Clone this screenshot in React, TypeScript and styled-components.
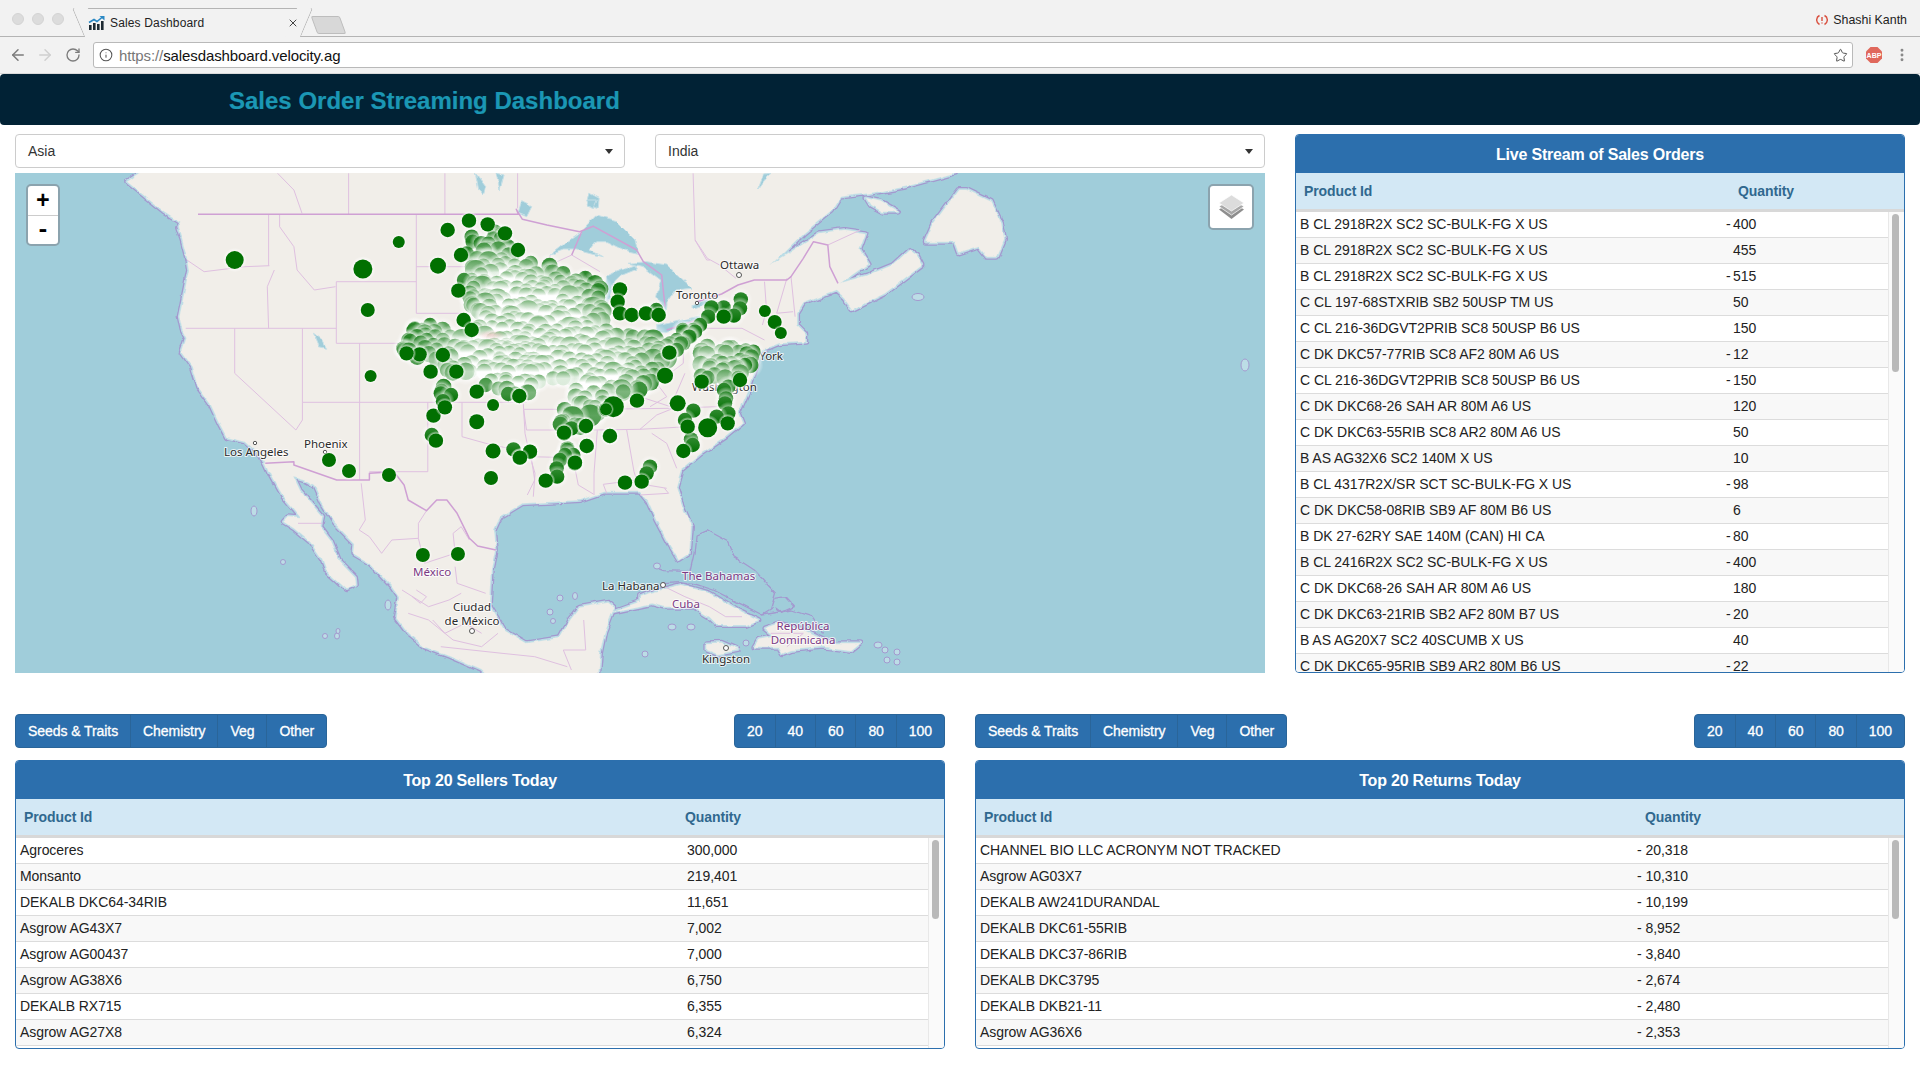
import React from "react";
import styled, { createGlobalStyle } from "styled-components";
import { ArrowLeft, ArrowRight, RotateCw, Info, Star, EllipsisVertical, X } from "lucide-react";

const GlobalStyle = createGlobalStyle`
  html, body { margin: 0; padding: 0; background: #fff; }
  body { font-family: "Liberation Sans", Arial, sans-serif; font-size: 14px; color: #222; overflow: hidden; }
`;

/* ---------- browser chrome ---------- */
const Page = styled.div`width: 1920px; height: 1080px; overflow: hidden; background: #fff;`;
const TabStrip = styled.div`
  height: 37px; box-sizing: border-box; background: #f2f2f2; border-bottom: 1px solid #b4b4b4;
  display: flex; align-items: flex-start; padding-left: 12px;
`;
const Lights = styled.div`display: flex; gap: 8px; margin-top: 13px;`;
const Light = styled.span`width: 12px; height: 12px; border-radius: 50%; background: #dcdcdc; border: 1px solid #d4d4d4; box-sizing: border-box;`;
const Tab = styled.div`
  position: relative; margin: 8px 0 -1px 21px; width: 215px; height: 29px; box-sizing: border-box;
  background: #f2f2f2; border-top: 1px solid #b4b4b4; display: flex; align-items: center; gap: 5px;
  padding: 0 0 0 3px; font-size: 12px; color: #222;
  &::before, &::after {
    content: ""; position: absolute; top: -1px; width: 16px; height: 29px; background: #f2f2f2; box-sizing: border-box;
  }
  &::before { left: -7px; border-left: 1px solid #b4b4b4; transform: skewX(23deg); border-top-left-radius: 3px; }
  &::after { right: -7px; border-right: 1px solid #b4b4b4; transform: skewX(-23deg); border-top-right-radius: 3px; }
`;
const TabLabel = styled.span`position: relative; z-index: 1; letter-spacing: 0.15px;`;
const TabClose = styled.span`position: relative; z-index: 1; margin-left: auto; margin-right: 1px; display: flex; color: #444;`;
const NewTab = styled.div`
  width: 27px; height: 16px; margin: 16px 0 0 14px; background: #d8d8d8; border: 1px solid #bdbdbd;
  border-radius: 2px; transform: skewX(20deg);
`;
const UserBadge = styled.div`margin-left: auto; margin-top: 13px; padding-right: 13px; display: flex; align-items: center; gap: 5px; font-size: 12.4px; color: #222;`;
const Toolbar = styled.div`
  height: 37px; box-sizing: border-box; background: #f2f2f2; border-bottom: 1px solid #dadada; display: flex; align-items: center;
  padding: 0 10px 0 9px;
`;
const NavButton = styled.span<{ $dim?: boolean }>`
  width: 27.500px; display: flex; color: ${p => (p.$dim ? "#d0d0d0" : "#7c7c7c")};
  &:nth-child(3) { padding-left: 1px; width: 26.500px; }
`;
const Omnibox = styled.div`
  width: 1761px; margin-left: 1.500px; height: 26px; box-sizing: border-box; background: #fff; border: 1px solid #b9b9b9;
  border-radius: 3px; display: flex; align-items: center; padding: 0 4px 0 5px; gap: 6px; font-size: 15px; color: #111;
  letter-spacing: -0.1px;
`;
const UrlScheme = styled.span`color: #777;`;
const InfoIcon = styled.span`display: flex; color: #555;`;
const StarIcon = styled.span`margin-left: auto; display: flex; color: #555;`;
const Extensions = styled.div`display: flex; align-items: center; margin-left: 12px; gap: 11px; color: #888;`;

/* ---------- header ---------- */
const Banner = styled.header`
  height: 51px; box-sizing: border-box; padding: 2px 0 0 229px; background: #012235; border-radius: 4px; display: flex; align-items: center;
`;
const BannerTitle = styled.h1`margin: 0; font-size: 24px; font-weight: 700; color: #1b97b4; -webkit-text-stroke: 0.2px #1b97b4;`;

/* ---------- page layout ---------- */
const Content = styled.main`padding: 9px 15px 0;`;
const TopRow = styled.section`display: grid; grid-template-columns: 1250px 610px; gap: 30px;`;
const MapColumn = styled.div`display: flex; flex-direction: column; gap: 5px;`;
const SelectRow = styled.div`display: grid; grid-template-columns: 610px 610px; gap: 30px;`;
const FakeSelect = styled.div`
  height: 34px; box-sizing: border-box; border: 1px solid #ccc; border-radius: 4px; background: #fff;
  display: flex; align-items: center; justify-content: space-between; padding: 0 11px 0 12px; font-size: 14px; color: #333;
  &::after { content: ""; border: 4.5px solid transparent; border-top: 5px solid #333; border-bottom: 0; }
`;
const MapFrame = styled.div`position: relative; height: 500px; background: #a0cdda; overflow: hidden;`;
const MapSvg = styled.svg`display: block; width: 1250px; height: 500px;`;
const ZoomControl = styled.div`
  position: absolute; left: 11px; top: 11px; width: 30px; border: 2px solid #8ba3ae; border-radius: 5px; background: #fff;
  display: flex; flex-direction: column;
`;
const ZoomButton = styled.div`
  height: 29px; box-sizing: border-box; padding-top: 2px; display: flex; align-items: center; justify-content: center;
  font: 700 23px "Liberation Mono", monospace; color: #000;
  & + & { border-top: 1px solid #ccc; }
`;
const LayersControl = styled.div`
  position: absolute; right: 11px; top: 11px; width: 42px; height: 42px; border: 2px solid #8ba3ae; border-radius: 5px;
  background: #fff; display: flex; align-items: center; justify-content: center;
`;
const BottomRow = styled.section`margin-top: 41px; display: grid; grid-template-columns: 930px 930px; gap: 30px;`;
const Block = styled.div`display: flex; flex-direction: column; gap: 12px;`;
const ToolRow = styled.div`display: flex; justify-content: space-between;`;
const ButtonGroup = styled.div`display: flex; height: 34px; border-radius: 4px; overflow: hidden; border: 1px solid #2a6599; box-sizing: border-box; background: #2c6fad;`;
const GroupButton = styled.div`
  padding: 0 12px; display: flex; align-items: center; color: #fff; font-size: 14px; -webkit-text-stroke: 0.3px #fff; letter-spacing: -0.07px;
  & + & { border-left: 1px solid #2a6599; }
`;

/* ---------- tables ---------- */
const Panel = styled.div<{ $h: number }>`
  height: ${p => p.$h}px; box-sizing: border-box; border: 1px solid #2c6fad; border-radius: 4px; overflow: hidden;
  display: flex; flex-direction: column; background: #fff;
`;
const PanelTitle = styled.div`
  flex: none; height: 38px; box-sizing: border-box; padding-top: 2px; background: #2c6fad; color: #fff; font-size: 16px; font-weight: 700; display: flex;
  align-items: center; justify-content: center; letter-spacing: -0.2px;
`;
const TableHead = styled.div<{ $col: number }>`
  flex: none; height: 36px; box-sizing: content-box; background: #d3e8f5; border-bottom: 3px solid #d8d8d8; color: #30688f;
  font-size: 14px; font-weight: 700; display: grid; grid-template-columns: ${p => p.$col}px 1fr; align-items: center;
  padding-left: 8px; letter-spacing: -0.1px;
`;
const TableBody = styled.div`flex: 1; min-height: 0; display: flex; overflow: hidden;`;
const Rows = styled.div`flex: 1; min-width: 0;`;
const Row = styled.div<{ $col: number; $alt: boolean }>`
  height: 26px; box-sizing: border-box; padding: 0 0 2px 4px; border-bottom: 1px solid #dcdcdc; display: grid; grid-template-columns: ${p => p.$col}px 1fr; align-items: center;
  background: ${p => (p.$alt ? "#f8f8f8" : "#fff")}; font-size: 14px; color: #222; white-space: nowrap; letter-spacing: -0.05px;
`;
const Sign = styled.span`display: inline-block; width: 7px;`;
const ScrollTrack = styled.div`flex: none; width: 16px; box-sizing: border-box; background: #fafafa; border-left: 1px solid #e8e8e8; padding: 2px 0 0 3px;`;
const ScrollThumb = styled.div<{ $h: number }>`width: 7px; height: ${p => p.$h}px; background: #b9b9b9; border-radius: 4px;`;

/* ---------- map styles ---------- */
const Coast = styled.path`fill: none; stroke: #a399cf; stroke-width: 6; stroke-linejoin: round;`;
const CoastInner = styled.path`fill: none; stroke: #bcdde6; stroke-width: 3.400; stroke-linejoin: round;`;
const Land = styled.path`fill: #f1eee9; stroke: #f1eee9; stroke-width: 0.4; stroke-linejoin: round;`;
const Lake = styled.path`fill: #a0cdda; stroke: #c6e0e7; stroke-width: 1; stroke-linejoin: round;`;
const StateLine = styled.path`fill: none; stroke: #dfc0e0; stroke-width: 1; stroke-linejoin: round;`;
const NationLine = styled.path`fill: none; stroke: #cfa0d4; stroke-width: 1.5; stroke-linejoin: round;`;
const OutlineOnly = styled.path`fill: none; stroke: #a399cf; stroke-width: 1.3; stroke-linejoin: round;`;
const Islet = styled.ellipse`fill: #bcdde6; stroke: #a399cf; stroke-width: 1;`;
const CityMark = styled.circle`fill: #fff; stroke: #555; stroke-width: 1;`;
const Label = styled.text<{ $place?: boolean }>`
  font-family: "Noto Sans", sans-serif; font-size: 11.5px; fill: ${p => (p.$place ? "#7b3a84" : "#2b2b2b")};
  stroke: rgba(255,255,255,.75); stroke-width: 2px; paint-order: stroke; stroke-linejoin: round;
`;

/* ---------- map geometry, traced in the reference's pixel space ---------- */
type Fn = (x: number, y: number) => [number, number];
const Z5: Fn = (x, y) => [x / 2.45, 170 + y / 3];
const Z6: Fn = (x, y) => [640 + x / 2.45, 170 + y / 3];
const Z7: Fn = (x, y) => [x / 2.45, 420 + y / 3];
const Z8: Fn = (x, y) => [640 + x / 2.45, 420 + y / 3];
const Z10: Fn = (x, y) => [390 + x / 3, 200 + y / 3];
const Z11: Fn = (x, y) => [510 + x / 3, 340 + y / 3];

const pts = (fn: Fn, s: string): [number, number][] =>
  s.trim().split(/\s+/).map(p => { const [a, b] = p.split(",").map(Number); return fn(a, b); });
const d = (p: [number, number][], close = false) =>
  "M" + p.map(q => q[0].toFixed(1) + " " + q[1].toFixed(1)).join("L") + (close ? "Z" : "");
const line = (fn: Fn, s: string) => d(pts(fn, s));
const shape = (fn: Fn, s: string) => d(pts(fn, s), true);

const mainland = d([
  ...pts(Z5, "345,-20 345,8 312,35 345,68 400,122 442,155 436,170 447,210 458,262 463,300 455,350 440,440 447,480 457,505 445,548 470,590 485,650 515,700 540,765 556,802 600,815 640,860"),
  ...pts(Z7, "650,130 665,170 690,225 720,268 738,295 705,292 695,305 720,325 760,365 790,420 800,452 850,508 872,495 870,470 830,420 810,360 785,320 790,290 770,262 735,212 718,168 745,178 770,195 790,250 820,310 870,372 868,402 905,428 960,500 978,532 970,592 1000,640 1040,680 1100,708 1180,750 1200,775 1465,775 1470,700 1480,640 1505,560 1490,545 1420,560 1395,600 1370,655 1290,670 1235,630 1200,560 1205,450 1215,390 1210,330 1225,290 1280,250 1350,245 1420,240 1480,215 1568,215"),
  ...pts(Z8, "0,215 20,245 40,300 70,370 95,420 120,400 125,320 100,250 88,200 100,150 150,100 210,50 250,10"),
  ...pts(Z6, "250,760 240,730 265,660 285,590 290,545 340,520 405,515 405,490 385,465 385,430 400,400 480,362 500,385 520,418 600,370 692,285 680,258 660,240 620,285 560,315 490,340 560,280 540,240 555,190 500,180 440,190 320,285 400,190 470,120 490,80 560,70 650,50 760,12 770,8 790,-20"),
], true);
const newfoundland = shape(Z6, "700,215 720,160 780,60 800,60 860,95 885,160 892,210 875,260 850,260 830,230 780,250 770,215");
const anticosti = shape(Z6, "555,85 590,95 632,125 595,125 565,105");
const cuba = d([...pts(Z7, "1568,545 1500,575"), ...pts(Z8, "30,550 60,560 130,560 170,590 190,615 260,615 290,600 240,570 170,520 100,495 20,520 0,530")], true);
const hispaniola = shape(Z8, "305,625 340,610 400,630 470,670 540,670 520,690 450,680 370,690 350,700 340,680 280,680 290,660 330,650");
const jamaica = shape(Z8, "165,670 200,668 240,690 190,702 165,690");
const bahamas = line(Z8, "55,488 100,485 130,490 180,510 260,560 300,585 320,570 332,520 280,450 230,410 215,365 165,332 140,345 135,400 125,455 60,452 35,440");
const bahamasEast = line(Z8, "332,535 355,530 378,560 345,578 330,565");
const cubaOuter = line(Z8, "300,585 370,570 420,590 450,640");
const landforms = [mainland, newfoundland, anticosti, cuba, hispaniola, jamaica];

const lakes = [
  shape(Z10, "480,165 525,130 572,97 620,48 680,65 735,120 745,160 700,150 650,125 620,125 600,150 640,170 560,150 520,150"),
  shape(Z10, "650,228 660,222 735,195 742,207 690,228 672,245 655,300 645,360 640,395 633,400 635,330"),
  shape(Z10, "770,185 830,195 880,240 908,265 855,270 828,310 826,335 800,290 812,240 760,200 715,190"),
  shape(Z10, "800,375 930,345 925,362 830,398 800,398"),
  shape(Z10, "905,318 950,300 962,310 915,326"),
  shape(Z5, "1165,10 1190,50 1185,72 1172,55"),
  shape(Z5, "1215,10 1235,15 1225,60"),
  shape(Z5, "1445,70 1468,85 1465,115 1438,105"),
  shape(Z5, "768,490 790,510 800,535 782,530"),
  shape(Z10, "385,40 395,5 425,20 410,50"),
  shape(Z10, "590,0 622,0 612,22 596,16"),
  shape(Z6, "290,60 320,10 305,12"),
];

const stateLines = [
  line(Z5, "458,270 500,305 600,290 660,287"), line(Z5, "658,135 658,287"), line(Z5, "672,300 655,350 658,475"),
  line(Z5, "685,135 685,170 720,230 728,300 770,360 822,350"), line(Z5, "824,335 1020,335"), line(Z5, "824,335 824,520 1020,520"),
  line(Z5, "1020,135 1020,430 1135,430"), line(Z5, "1020,290 1150,290"), line(Z5, "455,475 824,475"),
  line(Z5, "575,475 575,610 725,780 741,750 741,697"), line(Z5, "741,475 741,697 1290,697"), line(Z5, "881,520 881,930"),
  line(Z5, "1048,697 1048,905 905,905"), line(Z5, "1132,697 1132,800 1190,820 1300,850 1310,930 1292,975"),
  line(Z5, "1283,720 1290,780 1450,780"), line(Z5, "854,10 854,133"), line(Z5, "1090,10 1090,133"),
  line(Z5, "680,10 720,60 740,130"), line(Z5, "1268,10 1268,115"),
  line(Z10, "480,165 480,195 545,165 630,215"), line(Z10, "915,120 950,180 960,180"),
  line(Z11, "40,190 45,280 60,350 75,400 70,470"), line(Z11, "42,208 250,208 480,205 620,200"),
  line(Z11, "60,350 140,352 190,360 205,435 250,462"), line(Z11, "250,270 390,268"), line(Z11, "262,270 252,400 252,465"),
  line(Z11, "350,270 372,395 380,420 280,433 290,460"), line(Z11, "390,268 440,225 490,205"), line(Z11, "425,280 470,310 500,385"),
  line(Z11, "470,445 380,430"), line(Z11, "390,268 500,262 560,260"), line(Z11, "440,130 470,170 420,200"),
  line(Z11, "450,70 440,130 520,70 520,0"),
  line(Z6, "130,10 135,210 165,265 195,285 235,325"), line(Z6, "305,335 310,420 300,465"), line(Z6, "360,325 335,430 375,425"),
  line(Z6, "370,320 380,440"), line(Z6, "160,475 250,475 305,510"), line(Z6, "0,680 75,710 110,610"), line(Z6, "460,225 540,180"),
  line(Z8, "60,205 70,220 0,225"),
  line(Z7, "885,190 895,300 880,330 905,350 935,400 960,360 1025,355 1025,310 1045,272"),
  line(Z7, "1025,355 1040,430 1115,400 1110,340 1130,320 1150,360"), line(Z7, "1115,440 1120,490 1190,520"),
  line(Z7, "985,510 1050,560 1100,540 1130,520"), line(Z7, "1000,580 1050,600 1110,660 1180,680 1220,640"),
  line(Z7, "1080,680 1230,700 1310,710 1390,740"), line(Z7, "1430,600 1435,690 1380,690 1400,750"),
  line(Z7, "1020,510 1045,530 1030,550 1010,530"), line(Z7, "1060,600 1090,640 1140,610 1180,640"),
  line(Z7, "730,310 790,310"), line(Z8, "60,500 110,530 170,560 210,590 250,590"), line(Z8, "320,640 400,640 360,680"),
];
const nationLines = [
  line(Z5, "485,133 1270,133 1265,118 1280,148 1340,165 1420,185 1455,168"),
  line(Z10, "612,80 740,150 760,185 815,225 825,320"), line(Z10, "830,390 950,350"),
  line(Z10, "575,95 545,165"),
  line(Z6, "140,395 200,372 240,345 280,330 360,330 370,320 400,265 425,215 460,225 465,290 485,340"),
  line(Z7, "650,130 720,125 720,135 825,180 905,180 905,160 965,155 990,195 1000,240 1045,272 1070,240 1095,240 1120,280 1150,355 1170,378 1215,390"),
];

/* ---------- dots ---------- */
type Dot = { x: number; y: number; r: number; boost?: number };
const inPoly = (x: number, y: number, poly: [number, number][]) => {
  let inside = false;
  for (let i = 0, j = poly.length - 1; i < poly.length; j = i++) {
    const [xi, yi] = poly[i]; const [xj, yj] = poly[j];
    if (yi > y !== yj > y && x < ((xj - xi) * (y - yi)) / (yj - yi) + xi) inside = !inside;
  }
  return inside;
};
let seed = 20170;
const rnd = () => { seed = (seed * 48271) % 2147483647; return seed / 2147483647; };
const scatter = (poly: [number, number][], step: number, boost = 0): Dot[] => {
  const xs = poly.map(p => p[0]); const ys = poly.map(p => p[1]);
  const out: Dot[] = [];
  for (let y = Math.min(...ys); y < Math.max(...ys); y += step) {
    for (let x = Math.min(...xs); x < Math.max(...xs); x += step) {
      const px = x + (rnd() - 0.5) * step * 0.9; const py = y + (rnd() - 0.5) * step * 0.9;
      if (inPoly(px, py, poly)) out.push({ x: px, y: py, r: rnd() > 0.92 ? 11 : 7 + rnd() * 1.8, boost });
    }
  }
  return out;
};
const midwest = [
  ...pts(Z10, "235,170 300,100 345,100 360,160 420,185 510,195 560,235 625,230 640,320 660,400 830,420 850,470 790,530"),
  ...pts(Z11, "420,110 430,150 380,150 340,170 270,170 230,130 140,110 60,100"),
  ...pts(Z10, "320,480 250,420 260,340 230,290 240,230"),
];
const kansas = pts(Z5, "1000,470 1060,450 1140,500 1300,530 1330,620 1300,680 1240,680 1190,640 1150,610 1120,610 1100,680 1085,720 1070,710 1085,650 1085,600 1040,565 985,570 980,530");
const arm = pts(Z11, "165,190 200,140 270,160 290,200 230,260 150,270 140,240");
const atlantic = pts(Z11, "550,40 600,15 740,30 720,80 700,130 640,130 570,110 540,80");

const explicit = (fn: Fn, s: string, r = 7.2): Dot[] =>
  s.trim().split(/\s+/).map(p => { const [a, b, c] = p.split(",").map(Number); const [x, y] = fn(a, b); return { x, y, r: c || r }; });

const field: Dot[] = [
  ...scatter(midwest, 8), ...scatter(kansas, 9, 0.22), ...scatter(arm, 9, 0.28), ...scatter(atlantic, 9, 0.35),
  ...explicit(Z10, "245,110 248,125 310,115 315,95 230,160 245,240 222,240 240,295 250,315 95,390 120,375 75,385 55,420 110,420 130,435 40,445 880,395 900,410 915,395 860,420 840,430 880,430"),
  ...explicit(Z11, "180,220 225,225 240,200 172,325 150,360 190,345 140,385 165,345 550,212 525,240 543,298 548,315 620,230 655,220 645,190 648,175 642,150 655,140 420,380 410,400 300,190 645,85 680,80 705,75 690,60 730,35 710,40 570,40"),
  ...explicit(Z6, "247,388 245,415 230,437 205,412 175,412 167,440 147,465 130,480 105,480 120,500 100,520 90,540 15,430 40,420"),
  ...explicit(Z5, "1105,675 1080,670 1190,645 1245,672 1290,665 1240,635 1300,635 1320,635 1355,625 1380,625 1058,795 1258,838 1298,846 1400,775 1375,755 1500,708 1390,840 1408,880 1365,920"),
].sort((a, b) => a.y - b.y);

const BUCKETS = 8;
const shade = (m: number) => {
  const t = Math.min(1, Math.max(0, m));
  const c = (v: number) => Math.round(v + (255 - v) * t);
  return `rgb(${c(1)},${c(112)},${c(1)})`;
};
const bucketOf = (a: Dot) => {
  let n = 0;
  for (const b of field) {
    const dx = b.x - a.x; const dy = b.y - a.y;
    if (dx * dx + dy * dy < 1600) n++;
  }
  const t = Math.min(1, Math.max(0, (n - 32) / 36 + (a.boost || 0)));
  return Math.round(t * (BUCKETS - 1));
};

const topDots: Dot[] = [
  ...explicit(Z5, "575,270,9 889,297,9.5 977,216,6 901,420,7 908,618,6 806,870,7 855,903,7 953,915,7 1203,924,7 1208,843,7.5 1168,755,7.5 1208,705,6 1028,553 996,550 1085,555 1055,605 1118,605 1168,665 1272,678 1062,737 1090,712 1068,812 1273,863 1382,790 1435,768 1438,828 1494,798 1485,718 1337,932"),
  ...explicit(Z7, "1036,405,7 1122,402,7"),
  ...explicit(Z10, "237,62 173,90,7.2 293,73 345,100 384,150 213,165 144,197,8 205,272 221,360 245,390 690,268 683,305 690,340 725,345 768,340 806,345 838,458"),
  ...explicit(Z11, "478,38 465,107,8 503,190,8 381,182 310,200,10.5 288,208,6 28,168 300,288 230,318 228,258 162,278 60,335 30,353 195,368 345,428 395,425 520,333 533,260 593,263,9.5 653,250 690,120 575,125"),
  ...explicit(Z6, "306,423,6 330,456,7 345,489,6 205,440"),
];

const Cluster = () => (
  <>
    {field.map((c, i) => (
      <g key={i}>
        <circle cx={c.x} cy={c.y} r={c.r * 1.6} fill="url(#dotGlow)" />
        <circle cx={c.x} cy={c.y} r={c.r} fill={`url(#dome${bucketOf(c)})`} />
      </g>
    ))}
    {topDots.map((c, i) => (
      <g key={i}>
        <circle cx={c.x} cy={c.y} r={c.r * 1.35} fill="url(#dotGlowSoft)" />
        <circle cx={c.x} cy={c.y} r={c.r} fill="#017001" />
      </g>
    ))}
    <ellipse cx={491} cy={335} rx={14} ry={5} fill="url(#pinkSpot)" />
  </>
);

const UsMap = () => (
  <MapSvg viewBox="15 173 1250 500">
    <defs>
      <radialGradient id="dotGlow">
        <stop offset="0.55" stopColor="#fff" stopOpacity="0.6" />
        <stop offset="1" stopColor="#fff" stopOpacity="0" />
      </radialGradient>
      <radialGradient id="dotGlowSoft">
        <stop offset="0.7" stopColor="#fff" stopOpacity="0.7" />
        <stop offset="1" stopColor="#fff" stopOpacity="0" />
      </radialGradient>
      <radialGradient id="pinkSpot">
        <stop offset="0" stopColor="#f3c4c4" stopOpacity="0.65" />
        <stop offset="1" stopColor="#f3c4c4" stopOpacity="0" />
      </radialGradient>
      {Array.from({ length: BUCKETS }, (_, k) => {
        const t = k / (BUCKETS - 1);
        return (
          <linearGradient key={k} id={`dome${k}`} x1="0" y1="0" x2="0" y2="1">
            <stop offset="0" stopColor={shade(0.18 + 0.3 * t)} />
            <stop offset="0.5" stopColor={shade(0.1 + 0.9 * t)} />
            <stop offset="1" stopColor={shade(t)} />
          </linearGradient>
        );
      })}
      <filter id="roughCoast" filterUnits="userSpaceOnUse" x="0" y="150" width="1300" height="540">
        <feTurbulence type="fractalNoise" baseFrequency="0.07" numOctaves="3" seed="4" result="noise" />
        <feDisplacementMap in="SourceGraphic" in2="noise" scale="5" xChannelSelector="R" yChannelSelector="G" />
      </filter>
    </defs>
    <g filter="url(#roughCoast)">
      {landforms.map((p, i) => <Coast key={i} d={p} />)}
      {landforms.map((p, i) => <CoastInner key={i} d={p} />)}
      {landforms.map((p, i) => <Land key={i} d={p} />)}
      <OutlineOnly d={bahamas} /><OutlineOnly d={bahamasEast} /><OutlineOnly d={cubaOuter} />
      {lakes.map((p, i) => <Lake key={i} d={p} />)}
    </g>
    {stateLines.map((p, i) => <StateLine key={i} d={p} />)}
    {nationLines.map((p, i) => <NationLine key={i} d={p} />)}
    {[
      [254, 511, 3, 5], [283, 562, 2.5, 2.5], [325, 636, 2.5, 2.5], [337, 636, 2.5, 3], [338, 631, 2, 2.5], [388, 605, 3, 5],
      [560, 598, 3, 3], [575, 596, 2.5, 3.5], [550, 612, 3, 3], [553, 621, 2.5, 2.5], [918, 297, 6, 3.5], [1245, 365, 4, 6],
      [657, 566, 3.5, 3], [672, 627, 4, 3], [691, 627, 4, 3], [645, 654, 3, 3], [746, 643, 3, 3], [878, 645, 4, 3],
      [885, 650, 3, 3], [887, 660, 3, 3], [897, 652, 3, 3], [897, 662, 3, 3],
    ].map(([x, y, a, b], i) => <Islet key={i} cx={x} cy={y} rx={a} ry={b} />)}
    <Label x={224} y={456}>Los Angeles</Label>
    <Label x={304} y={448}>Phoenix</Label>
    <Label x={720} y={269}>Ottawa</Label>
    <Label x={676} y={299}>Toronto</Label>
    <Label x={783} y={360} textAnchor="end">New York</Label>
    <Label x={692} y={391}>Washington</Label>
    <Label $place x={413} y={576}>México</Label>
    <Label x={472} y={611} textAnchor="middle">Ciudad</Label>
    <Label x={472} y={625} textAnchor="middle">de México</Label>
    <Label x={602} y={590}>La Habana</Label>
    <Label $place x={682} y={580}>The Bahamas</Label>
    <Label $place x={672} y={608}>Cuba</Label>
    <Label $place x={803} y={630} textAnchor="middle">República</Label>
    <Label $place x={803} y={644} textAnchor="middle">Dominicana</Label>
    <Label x={726} y={663} textAnchor="middle">Kingston</Label>
    <CityMark cx={255} cy={443} r={1.7} /><CityMark cx={325} cy={452} r={1.7} /><CityMark cx={739} cy={275} r={2.5} />
    <CityMark cx={697} cy={303} r={1.7} /><CityMark cx={472} cy={631} r={2.5} /><CityMark cx={663} cy={585} r={2.5} />
    <CityMark cx={726} cy={648} r={2.5} />
    <Cluster />
  </MapSvg>
);

const LayersIcon = () => (
  <svg width="27" height="26" viewBox="0 0 27 26">
    <path d="M1 15.5 13.5 8 26 15.5 13.5 25Z" fill="#8e8e8e" />
    <path d="M1 12.5 13.5 5 26 12.5 13.5 21Z" fill="#a8a8a8" stroke="#fff" strokeWidth=".7" />
    <path d="M1 9 13.5 1 26 9 13.5 17Z" fill="#dcdcdc" stroke="#fff" strokeWidth=".7" />
  </svg>
);
const Favicon = () => (
  <svg width="17" height="14" viewBox="0 0 17 14" style={{ position: "relative", zIndex: 1 }}>
    <path d="M1 9h2.6v5H1zM5 7h2.6v7H5zM9 8h2.6v6H9zM13 5h2.6v9H13z" fill="#1d2a33" />
    <path d="M1 6.5 6 3.5 9 5.5 14.5 1" fill="none" stroke="#2a88c4" strokeWidth="1.6" />
    <path d="M11.5 0H16.500V4.500Z" fill="#2a88c4" />
  </svg>
);
const SyncIcon = () => (
  <svg width="12" height="12" viewBox="0 0 12 12" fill="none" stroke="#d9503f" strokeWidth="1.4">
    <path d="M3.5 1.500A5 5 0 0 0 3.500 10.500" /><path d="M8.500 1.500A5 5 0 0 1 8.500 10.500" />
    <path d="M6 3v4M6 8.500v1" />
  </svg>
);
const AbpIcon = () => (
  <svg width="18" height="18" viewBox="0 0 18 18">
    <path d="M5.500 1h7L17 5.500v7L12.500 17h-7L1 12.500v-7Z" fill="#e0685c" />
    <text x="9" y="11.500" textAnchor="middle" fontSize="7" fontWeight="700" fontFamily="Liberation Sans, sans-serif" fill="#fff">ABP</text>
  </svg>
);

/* ---------- data ---------- */
const liveRows: [string, number][] = [
  ["B CL 2918R2X SC2 SC-BULK-FG X US", -400], ["B CL 2918R2X SC2 SC-BULK-FG X US", 455], ["B CL 2918R2X SC2 SC-BULK-FG X US", -515],
  ["C CL 197-68STXRIB SB2 50USP TM US", 50], ["C CL 216-36DGVT2PRIB SC8 50USP B6 US", 150], ["C DK DKC57-77RIB SC8 AF2 80M A6 US", -12],
  ["C CL 216-36DGVT2PRIB SC8 50USP B6 US", -150], ["C DK DKC68-26 SAH AR 80M A6 US", 120], ["C DK DKC63-55RIB SC8 AR2 80M A6 US", 50],
  ["B AS AG32X6 SC2 140M X US", 10], ["B CL 4317R2X/SR SCT SC-BULK-FG X US", -98], ["C DK DKC58-08RIB SB9 AF 80M B6 US", 6],
  ["B DK 27-62RY SAE 140M (CAN) HI CA", -80], ["B CL 2416R2X SC2 SC-BULK-FG X US", -400], ["C DK DKC68-26 SAH AR 80M A6 US", 180],
  ["C DK DKC63-21RIB SB2 AF2 80M B7 US", -20], ["B AS AG20X7 SC2 40SCUMB X US", 40], ["C DK DKC65-95RIB SB9 AR2 80M B6 US", -22],
];
const sellers: [string, string][] = [
  ["Agroceres", "300,000"], ["Monsanto", "219,401"], ["DEKALB DKC64-34RIB", "11,651"], ["Asgrow AG43X7", "7,002"],
  ["Asgrow AG00437", "7,000"], ["Asgrow AG38X6", "6,750"], ["DEKALB RX715", "6,355"], ["Asgrow AG27X8", "6,324"],
];
const returns: [string, string][] = [
  ["CHANNEL BIO LLC ACRONYM NOT TRACKED", "- 20,318"], ["Asgrow AG03X7", "- 10,310"], ["DEKALB AW241DURANDAL", "- 10,199"],
  ["DEKALB DKC61-55RIB", "- 8,952"], ["DEKALB DKC37-86RIB", "- 3,840"], ["DEKALB DKC3795", "- 2,674"], ["DEKALB DKB21-11", "- 2,480"],
  ["Asgrow AG36X6", "- 2,353"],
];

const DataPanel = ({ title, height, headCol, cellCol, thumb, children }: {
  title: string; height: number; headCol: number; cellCol: number; thumb: number; children: React.ReactNode[];
}) => (
  <Panel $h={height}>
    <PanelTitle>{title}</PanelTitle>
    <TableHead $col={headCol}><span>Product Id</span><span>Quantity</span></TableHead>
    <TableBody>
      <Rows>
        {children.map((c, i) => <Row key={i} $col={cellCol} $alt={i % 2 === 1}>{c}</Row>)}
      </Rows>
      <ScrollTrack><ScrollThumb $h={thumb} /></ScrollTrack>
    </TableBody>
  </Panel>
);

const Filters = () => (
  <ToolRow>
    <ButtonGroup>
      {["Seeds & Traits", "Chemistry", "Veg", "Other"].map(t => <GroupButton key={t}>{t}</GroupButton>)}
    </ButtonGroup>
    <ButtonGroup>
      {["20", "40", "60", "80", "100"].map(t => <GroupButton key={t}>{t}</GroupButton>)}
    </ButtonGroup>
  </ToolRow>
);

export default function App() {
  return (
    <Page>
      <GlobalStyle />
      <TabStrip>
        <Lights><Light /><Light /><Light /></Lights>
        <Tab>
          <Favicon />
          <TabLabel>Sales Dashboard</TabLabel>
          <TabClose><X size={12} strokeWidth={2} /></TabClose>
        </Tab>
        <NewTab />
        <UserBadge><SyncIcon /><span>Shashi Kanth</span></UserBadge>
      </TabStrip>
      <Toolbar>
        <NavButton><ArrowLeft size={18} strokeWidth={2} /></NavButton>
        <NavButton $dim><ArrowRight size={18} strokeWidth={2} /></NavButton>
        <NavButton><RotateCw size={16} strokeWidth={2} /></NavButton>
        <Omnibox>
          <InfoIcon><Info size={14} strokeWidth={1.8} /></InfoIcon>
          <span><UrlScheme>https://</UrlScheme>salesdashboard.velocity.ag</span>
          <StarIcon><Star size={15} strokeWidth={1.6} /></StarIcon>
        </Omnibox>
        <Extensions><AbpIcon /><EllipsisVertical size={16} strokeWidth={2.4} /></Extensions>
      </Toolbar>
      <Banner><BannerTitle>Sales Order Streaming Dashboard</BannerTitle></Banner>
      <Content>
        <TopRow>
          <MapColumn>
            <SelectRow>
              <FakeSelect>Asia</FakeSelect>
              <FakeSelect>India</FakeSelect>
            </SelectRow>
            <MapFrame>
              <UsMap />
              <ZoomControl>
                <ZoomButton>+</ZoomButton>
                <ZoomButton>-</ZoomButton>
              </ZoomControl>
              <LayersControl><LayersIcon /></LayersControl>
            </MapFrame>
          </MapColumn>
          <DataPanel
            title="Live Stream of Sales Orders" height={539} headCol={434} cellCol={426} thumb={158}
          >
            {liveRows.map(([name, q], i) => (
              <React.Fragment key={i}>
                <span>{name}</span>
                <span><Sign>{q < 0 ? "-" : ""}</Sign>{Math.abs(q)}</span>
              </React.Fragment>
            ))}
          </DataPanel>
        </TopRow>
        <BottomRow>
          <Block>
            <Filters />
            <DataPanel title="Top 20 Sellers Today" height={289} headCol={661} cellCol={667} thumb={79}>
              {sellers.map(([n, q], i) => <React.Fragment key={i}><span>{n}</span><span>{q}</span></React.Fragment>)}
            </DataPanel>
          </Block>
          <Block>
            <Filters />
            <DataPanel title="Top 20 Returns Today" height={289} headCol={661} cellCol={657} thumb={79}>
              {returns.map(([n, q], i) => <React.Fragment key={i}><span>{n}</span><span>{q}</span></React.Fragment>)}
            </DataPanel>
          </Block>
        </BottomRow>
      </Content>
    </Page>
  );
}
